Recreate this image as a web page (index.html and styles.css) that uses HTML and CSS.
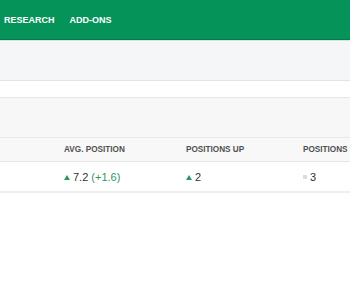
FILE: index.html
```html
<!DOCTYPE html>
<html lang="en">
<head>
    <meta charset="UTF-8">
    <title>Rankings</title>
    <link rel="stylesheet" href="styles.css">
</head>
<body>
    <div class="nav">
        <a class="nav-link">RESEARCH</a>
        <a class="nav-link">ADD-ONS</a>
    </div>
    <div class="subbar"></div>
    <div class="strip"></div>
    <div class="panel"></div>

    <div class="table">
        <div class="row head">
            <div class="cell first"></div>
            <div class="cell">AVG. POSITION</div>
            <div class="cell">POSITIONS UP</div>
            <div class="cell last">POSITIONS DOWN</div>
        </div>
        <div class="row">
            <div class="cell first"></div>
            <div class="cell"><span class="up"></span>7.2 <span class="diff">(+1.6)</span></div>
            <div class="cell"><span class="up"></span>2</div>
            <div class="cell last"><span class="same"></span>3</div>
        </div>
    </div>
</body>
</html>
```

FILE: styles.css
```css
body{
    margin: 0;
    font-family: 'Liberation Sans', Arial, sans-serif;
    background: #fff;
    overflow: hidden;
}
.nav{
    height: 39px;
    background: #06935a;
    border-bottom: 1px solid #057a4a;
    display: flex;
    align-items: center;
    gap: 15px;
    padding-left: 4px;
    box-shadow: 0 1px 0 #cfe8da;
}
.nav-link{
    color: #fff;
    font-weight: bold;
    font-size: 9px;
    padding-top: 1px;
}
.subbar{
    height: 39px;
    margin-top: 1px;
    background: #f5f6f8;
    border-bottom: 1px solid #e2e3e6;
}
.strip{
    height: 16px;
    background: #fff;
    border-bottom: 1px solid #e6e6e8;
}
.panel{
    height: 39px;
    background: #f7f7f8;
    border-bottom: 1px solid #e8e8e8;
}
.row{
    display: grid;
    grid-template-columns: 64px 122px 117px 1fr;
    white-space: nowrap;
}
.row.head{
    height: 23px;
    background: #f8f8f9;
    border-bottom: 1px solid #e6e6e6;
    font-size: 8.2px;
    font-weight: bold;
    color: #505050;
}
.row:not(.head){
    height: 29px;
    border-bottom: 2px solid #eeeeee;
    font-size: 11px;
    color: #333;
}
.cell{
    display: flex;
    align-items: center;
}
.cell.last{
    overflow: hidden;
}
.up{
    flex: none;
    width: 0;
    height: 0;
    border-left: 3px solid transparent;
    border-right: 3px solid transparent;
    border-bottom: 5px solid #2e9463;
    margin-right: 3px;
    margin-top: 1px;
}
.same{
    flex: none;
    width: 4px;
    height: 4px;
    background: #dcdcdc;
    margin-right: 3px;
}
.diff{
    color: #2f9a5b;
    margin-left: 3px;
}
```
